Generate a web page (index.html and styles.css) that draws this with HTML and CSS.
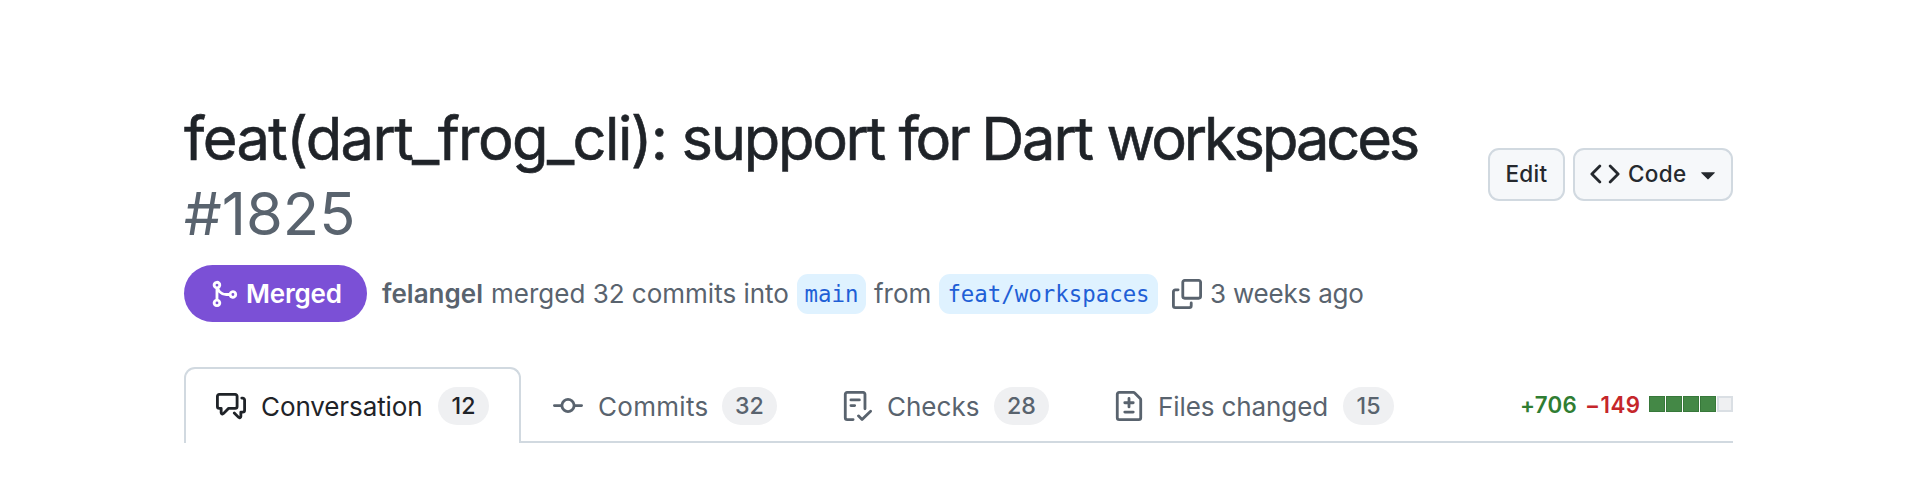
FILE: index.html
```html
<!DOCTYPE html>
<html lang="en">
<head>
<meta charset="utf-8">
<title>feat(dart_frog_cli): support for Dart workspaces #1825</title>
<link rel="stylesheet" href="styles.css">
</head>
<body>
<main class="page">
  <header class="header">
    <h1 class="title"><span class="title-name"><span class="w-scope">feat(dart_frog_cli): </span><span class="w-support">support </span><span class="w-for">for </span><span class="w-dart">Dart </span><span class="w-workspaces">workspaces</span></span><span class="title-number">#1825</span></h1>
    <div class="actions">
      <button class="btn btn-edit"><span class="btn-text">Edit</span></button>
      <button class="btn btn-code">
        <svg class="icon" viewBox="0 0 16 16"><path d="m11.28 3.22 4.25 4.25a.75.75 0 0 1 0 1.06l-4.25 4.25a.749.749 0 0 1-1.275-.326.749.749 0 0 1 .215-.734L13.94 8l-3.72-3.72a.749.749 0 0 1 .326-1.275.749.749 0 0 1 .734.215Zm-6.56 0a.751.751 0 0 1 1.042.018.751.751 0 0 1 .018 1.042L2.06 8l3.72 3.72a.749.749 0 0 1-.326 1.275.749.749 0 0 1-.734-.215L.47 8.53a.75.75 0 0 1 0-1.06Z"/></svg>
        <span class="btn-text">Code</span>
        <svg class="icon caret" viewBox="0 0 16 16"><path d="m4.427 7.427 3.396 3.396a.25.25 0 0 0 .354 0l3.396-3.396A.25.25 0 0 0 11.396 7H4.604a.25.25 0 0 0-.177.427Z"/></svg>
      </button>
    </div>
  </header>

  <section class="meta">
    <span class="state">
      <svg class="icon" viewBox="0 0 16 16"><path d="M5.45 5.154A4.25 4.25 0 0 0 9.25 7.5h1.378a2.251 2.251 0 1 1 0 1.5H9.25A5.734 5.734 0 0 1 5 7.123v3.505a2.25 2.25 0 1 1-1.5 0V5.372a2.25 2.25 0 1 1 1.95-.218ZM4.25 13.5a.75.75 0 1 0 0-1.5.75.75 0 0 0 0 1.5Zm8.5-4.5a.75.75 0 1 0 0-1.5.75.75 0 0 0 0 1.5ZM5 3.25a.75.75 0 1 0 0 .005V3.25Z"/></svg>
      <span class="state-text">Merged</span>
    </span>
    <span class="author">felangel</span>
    <span class="summary">merged 32 commits into</span>
    <span class="branch branch-base">main</span>
    <span class="from">from</span>
    <span class="branch branch-head">feat/workspaces</span>
    <svg class="icon copy" viewBox="0 0 16 16"><path d="M0 6.75C0 5.784.784 5 1.75 5h1.5a.75.75 0 0 1 0 1.5h-1.5a.25.25 0 0 0-.25.25v7.5c0 .138.112.25.25.25h7.5a.25.25 0 0 0 .25-.25v-1.5a.75.75 0 0 1 1.5 0v1.5A1.75 1.75 0 0 1 9.25 16h-7.5A1.75 1.75 0 0 1 0 14.25Z"/><path d="M5 1.75C5 .784 5.784 0 6.75 0h7.5C15.216 0 16 .784 16 1.75v7.5A1.75 1.75 0 0 1 14.25 11h-7.5A1.75 1.75 0 0 1 5 9.25Zm1.75-.25a.25.25 0 0 0-.25.25v7.5c0 .138.112.25.25.25h7.5a.25.25 0 0 0 .25-.25v-7.5a.25.25 0 0 0-.25-.25Z"/></svg>
    <span class="time">3 weeks ago</span>
  </section>

  <nav class="tabs">
    <a class="tab tab-conversation selected">
      <svg class="icon" viewBox="0 0 16 16"><path d="M1.75 1h8.5c.966 0 1.75.784 1.75 1.75v5.5A1.75 1.75 0 0 1 10.25 10H7.061l-2.574 2.573A1.458 1.458 0 0 1 2 11.543V10h-.25A1.75 1.75 0 0 1 0 8.25v-5.5C0 1.784.784 1 1.75 1ZM1.5 2.75v5.5c0 .138.112.25.25.25h1a.75.75 0 0 1 .75.75v2.19l2.72-2.72a.749.749 0 0 1 .53-.22h3.5a.25.25 0 0 0 .25-.25v-5.5a.25.25 0 0 0-.25-.25h-8.5a.25.25 0 0 0-.25.25Zm13 2a.25.25 0 0 0-.25-.25h-.5a.75.75 0 0 1 0-1.5h.5c.966 0 1.75.784 1.75 1.75v5.5A1.75 1.75 0 0 1 14.25 12H14v1.543a1.458 1.458 0 0 1-2.487 1.03L9.22 12.28a.749.749 0 0 1 .326-1.275.749.749 0 0 1 .734.215l2.22 2.22v-2.19a.75.75 0 0 1 .75-.75h1a.25.25 0 0 0 .25-.25Z"/></svg>
      <span class="tab-text">Conversation</span><span class="count">12</span>
    </a>
    <a class="tab tab-commits">
      <svg class="icon" viewBox="0 0 16 16"><path d="M11.93 8.5a4.002 4.002 0 0 1-7.86 0H.75a.75.75 0 0 1 0-1.5h3.32a4.002 4.002 0 0 1 7.86 0h3.32a.75.75 0 0 1 0 1.5Zm-1.43-.75a2.5 2.5 0 1 0-5 0 2.5 2.5 0 0 0 5 0Z"/></svg>
      <span class="tab-text">Commits</span><span class="count">32</span>
    </a>
    <a class="tab tab-checks">
      <svg class="icon" viewBox="0 0 16 16"><path d="M2.5 1.75v12.5c0 .138.112.25.25.25h3.17a.75.75 0 0 1 0 1.5H2.75A1.75 1.75 0 0 1 1 14.25V1.75C1 .784 1.784 0 2.75 0h8.5C12.216 0 13 .784 13 1.75v7.736a.75.75 0 0 1-1.5 0V1.75a.25.25 0 0 0-.25-.25h-8.5a.25.25 0 0 0-.25.25Zm13.274 9.537v-.001l-4.557 4.45a.75.75 0 0 1-1.055-.008l-1.943-1.95a.75.75 0 0 1 1.062-1.058l1.419 1.425 4.026-3.932a.75.75 0 1 1 1.048 1.074ZM4.75 4h4.5a.75.75 0 0 1 0 1.5h-4.5a.75.75 0 0 1 0-1.5ZM4 7.75A.75.75 0 0 1 4.75 7h2a.75.75 0 0 1 0 1.5h-2A.75.75 0 0 1 4 7.75Z"/></svg>
      <span class="tab-text">Checks</span><span class="count">28</span>
    </a>
    <a class="tab tab-files">
      <svg class="icon" viewBox="0 0 16 16"><path d="M1 1.75C1 .784 1.784 0 2.75 0h7.586c.464 0 .909.184 1.237.513l2.914 2.914c.329.328.513.773.513 1.237v9.586A1.75 1.75 0 0 1 13.25 16H2.75A1.75 1.75 0 0 1 1 14.25Zm1.75-.25a.25.25 0 0 0-.25.25v12.5c0 .138.112.25.25.25h10.5a.25.25 0 0 0 .25-.25V4.664a.25.25 0 0 0-.073-.177l-2.914-2.914a.25.25 0 0 0-.177-.073ZM8 3.25a.75.75 0 0 1 .75.75v1.5h1.5a.75.75 0 0 1 0 1.5h-1.5v1.5a.75.75 0 0 1-1.5 0V7h-1.5a.75.75 0 0 1 0-1.5h1.5V4A.75.75 0 0 1 8 3.25Zm-3 8a.75.75 0 0 1 .75-.75h4.5a.75.75 0 0 1 0 1.5h-4.5a.75.75 0 0 1-.75-.75Z"/></svg>
      <span class="tab-text">Files changed</span><span class="count">15</span>
    </a>
    <div class="diffstat">
      <span class="added">+706</span>
      <span class="removed">−149</span>
      <span class="blocks"><i class="block"></i><i class="block"></i><i class="block"></i><i class="block"></i><i class="block neutral"></i></span>
    </div>
  </nav>
</main>
</body>
</html>
```

FILE: styles.css
```css
* { box-sizing: border-box; }
body { margin: 0; background: #fff; font-family: Inter, "Liberation Sans", sans-serif; color: #1f2328; }
.page { width: 1549px; margin-left: 184px; padding-top: 100px; }
.icon { width: 30px; height: 30px; fill: currentColor; flex: none; display: block; }

.header { display: flex; justify-content: space-between; height: 153px; }
.title { margin: 0; width: 1250px; display: flex; flex-direction: column; font-size: 59.6px; line-height: 76px; font-weight: 400; white-space: nowrap; }
.title-name { white-space: pre; -webkit-text-stroke: 0.6px currentColor; }
.title-number { margin-top: -1px; color: #59636e; letter-spacing: 0; }
.w-scope { letter-spacing: -1.6px; }
.w-support { letter-spacing: -2.28px; }
.w-for { letter-spacing: -3.1px; }
.w-dart { letter-spacing: -2.15px; }
.w-workspaces { letter-spacing: -3.12px; }

.actions { display: flex; gap: 8px; padding-top: 48px; }
.btn { height: 53px; display: flex; align-items: center; border: 2px solid #d1d9e0; border-radius: 11px; background: #f6f8fa; color: #25292e; font: 500 22.5px Inter, sans-serif; letter-spacing: 0.3px; padding: 0 0 2px; white-space: nowrap; }
.btn-edit { width: 77px; justify-content: center; }
.btn-code { width: 160px; padding-left: 15px; }
.btn-code .btn-text { width: 62px; margin-left: 8px; text-align: left; }
.caret { margin-left: 3px; }

.meta { display: flex; align-items: center; height: 57px; margin-top: 12px; font-size: 26px; color: #59636e; white-space: nowrap; }
.state { display: flex; align-items: center; width: 183px; height: 57px; padding-left: 25px; border-radius: 29px; background: #7b50d6; color: #fff; font-weight: 600; }
.state-text { margin-left: 7px; letter-spacing: -0.2px; }
.author { width: 109px; margin-left: 15px; font-weight: 600; }
.summary { width: 306px; }
.branch { height: 40px; line-height: 40px; margin-top: 1px; border-radius: 11px; background: #dff2ff; color: #1f5fd6; font-family: "DejaVu Sans Mono", monospace; font-size: 22.4px; text-align: center; }
.branch-base { width: 69px; }
.branch-head { width: 219px; }
.from { width: 73px; padding-left: 8px; }
.copy { margin-left: 14px; }
.time { margin-left: 8px; letter-spacing: -0.2px; }

.tabs { display: flex; height: 76px; margin-top: 45px; font-size: 26px; color: #59636e; white-space: nowrap; box-shadow: inset 0 -2px #d1d9e0; }
.tab { display: flex; align-items: center; height: 76px; padding-top: 2px; }
.tab-text { margin-left: 16px; }
.tab-conversation { width: 337px; padding: 0 0 0 30px; border: 2px solid #d1d9e0; border-bottom: 0; border-radius: 11px 11px 0 0; background: #fff; color: #1f2328; }
.tab-conversation .tab-text { width: 177px; margin-left: 15px; letter-spacing: -0.1px; }
.tab-commits { width: 291px; padding-left: 32px; }
.tab-commits .tab-text { width: 124px; letter-spacing: 0.3px; margin-left: 15px; }
.tab-checks { width: 302px; padding-left: 30px; }
.tab-checks .tab-text { width: 107px; margin-left: 15px; }
.tab-files { width: 300px; }
.tab-files .tab-text { width: 185px; margin-left: 14px; letter-spacing: -0.1px; }
.count { width: 55px; height: 38px; line-height: 38px; border-radius: 19px; background: #eff0f2; font-size: 23.2px; font-weight: 500; text-align: center; }
.tab-conversation .count, .tab-files .count { width: 51px; }

.diffstat { display: flex; align-items: center; height: 76px; padding-bottom: 2px; margin-left: auto; font-size: 22.3px; font-weight: 600; }
.added { width: 65px; color: #2f7d32; letter-spacing: 0.3px; }
.removed { width: 64px; color: #c5262a; letter-spacing: 0.5px; }
.blocks { display: flex; gap: 1px; }
.block { width: 16px; height: 16px; background: #448846; border: 1px solid #37783a; }
.neutral { background: #eff0f2; border: 2px solid #dadfe4; }
```
